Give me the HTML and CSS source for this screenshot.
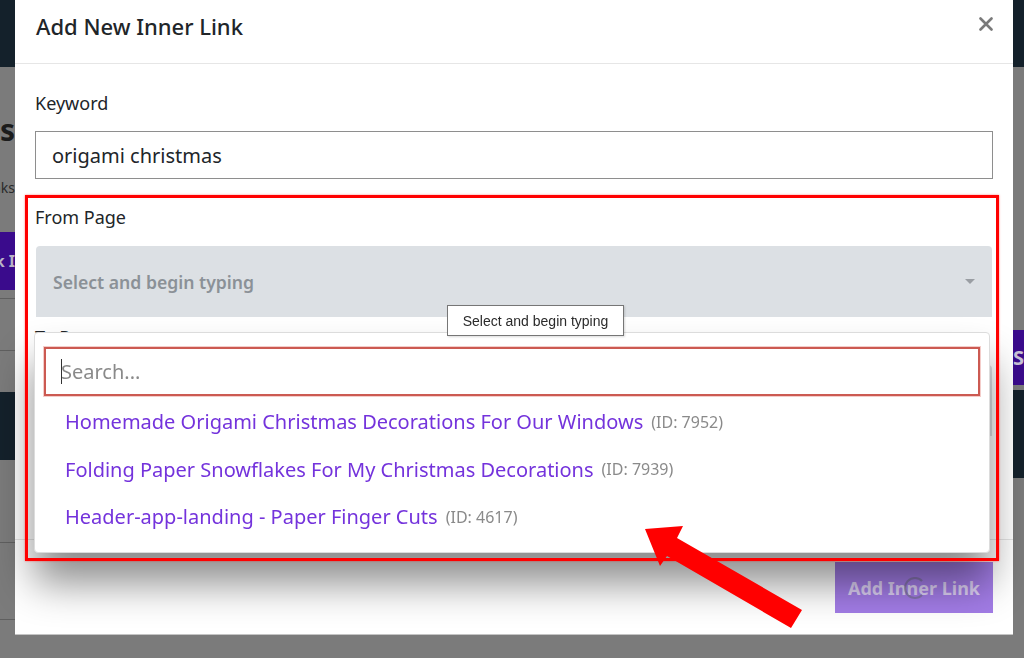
FILE: index.html
```html
<!DOCTYPE html>
<html lang="en">
<head>
    <meta charset="UTF-8">
    <meta name="viewport" content="width=device-width, initial-scale=1.0">
    <title>Add New Inner Link</title>
    <link rel="stylesheet" href="styles.css">
</head>
<body>
    <!-- Page behind the modal (dimmed) -->
    <div class="page">
        <header class="topbar"></header>
        <div class="page-main">
            <div class="side side-left">
                <h1 class="page-heading">Inner Links</h1>
                <p class="page-sub">Manage inner links</p>
                <button class="btn-dark">Add Link I</button>
                <div class="bg-rule rule-1"></div>
                <div class="bg-rule rule-2"></div>
                <div class="bg-thead"></div>
                <div class="bg-rule rule-3"></div>
                <div class="bg-rule rule-4"></div>
            </div>
            <div class="page-center"></div>
            <div class="side side-right">
                <button class="btn-dark btn-search">Search</button>
                <div class="bg-thead thead-right"></div>
            </div>
        </div>
    </div>

    <!-- Modal -->
    <div class="modal">
        <div class="modal-header">
            <h2 class="modal-title">Add New Inner Link</h2>
            <svg class="close-icon" width="14" height="14" viewBox="0 0 14 14">
                <path d="M1.5 1.5 L12.5 12.5 M12.5 1.5 L1.5 12.5" stroke="#7a7a7a" stroke-width="2.6" stroke-linecap="round"/>
            </svg>
        </div>

        <div class="modal-body">
            <div class="field">
                <div class="field-label">Keyword</div>
                <div class="text-input">origami christmas</div>
            </div>

            <div class="field field-from">
                <div class="field-label">From Page</div>
                <div class="select-wrap">
                    <div class="select-box">
                        <span>Select and begin typing</span>
                        <span class="select-caret"></span>
                    </div>

                    <!-- open dropdown -->
                    <div class="dropdown">
                        <div class="search-box">
                            <span class="text-caret"></span>
                            <span class="search-placeholder">Search...</span>
                        </div>
                        <ul class="result-list">
                            <li class="result-item">Homemade Origami Christmas Decorations For Our Windows <span class="result-id">(ID: 7952)</span></li>
                            <li class="result-item">Folding Paper Snowflakes For My Christmas Decorations <span class="result-id">(ID: 7939)</span></li>
                            <li class="result-item">Header-app-landing - Paper Finger Cuts <span class="result-id">(ID: 4617)</span></li>
                        </ul>
                    </div>
                </div>
            </div>

            <div class="field field-to">
                <div class="field-label">To Page</div>
                <div class="select-box"></div>
            </div>

            <div class="tooltip">Select and begin typing</div>
        </div>

        <div class="modal-footer">
            <button class="btn-submit">
                Add Inner Link
                <span class="spinner"></span>
            </button>
        </div>
    </div>

    <!-- Annotation -->
    <div class="annot-box"></div>
    <svg class="annot-arrow" width="1024" height="658" viewBox="0 0 1024 658">
        <polygon points="645,529 683,526 677,538 802,610 791,628 667,556 660,566" fill="#ff0000"/>
    </svg>
</body>
</html>
```

FILE: styles.css
```css
/* General Styles */
* {
    box-sizing: border-box;
}

body {
    margin: 0;
    height: 100vh;
    overflow: hidden;
    font-family: "Noto Sans", "Open Sans", sans-serif;
    background-color: #7b7b7b;
    color: #212529;
}

/* Background page (under the overlay) */
.topbar {
    height: 67px;
    background-color: #14212b;
}

.page-main {
    display: grid;
    grid-template-columns: 15px 1fr 11px;
}

.side {
    display: flex;
    flex-direction: column;
    overflow: hidden;
}

.side-left {
    align-items: flex-end;
    padding-top: 43px;
}

.page-heading {
    margin: 0;
    font-size: 30px;
    line-height: 40px;
    font-weight: 700;
    white-space: nowrap;
    color: #1c1c1c;
}

.page-sub {
    margin: 28px 0 0;
    font-size: 14px;
    line-height: 20px;
    white-space: nowrap;
    color: #2a2a2a;
}

.btn-dark {
    margin-top: 34px;
    height: 58px;
    padding: 0;
    border: none;
    background-color: #3a0b8c;
    color: #b9b3c6;
    font-family: inherit;
    font-size: 16px;
    font-weight: 700;
    white-space: nowrap;
}

.bg-rule {
    align-self: stretch;
    height: 1px;
    background-color: #5f5f5f;
}

.rule-1 { margin-top: 8px; }
.rule-2 { margin-top: 51px; }
.rule-3 { margin-top: 82px; }
.rule-4 { margin-top: 76px; }

.bg-thead {
    align-self: stretch;
    margin-top: 41px;
    height: 68px;
    background-color: #14212b;
}

.side-right {
    align-items: flex-start;
}

.btn-search {
    margin-top: 263px;
    height: 55px;
    padding: 0;
    font-size: 20px;
    letter-spacing: -1px;
    align-self: stretch;
    text-align: left;
    color: #c9c3d6;
}

.thead-right {
    margin-top: 5px;
    height: 88px;
}

/* Modal */
.modal {
    position: fixed;
    left: 15px;
    top: 0;
    width: 998px;
    height: 635px;
    background-color: #fff;
    border-bottom: 1px solid #c4c4c4;
    display: flex;
    flex-direction: column;
}

.modal-header {
    height: 64px;
    padding: 11px 21px 0 21px;
    display: flex;
    justify-content: space-between;
    align-items: flex-start;
    border-bottom: 1px solid #e6e6e6;
}

.modal-title {
    margin: 0;
    font-size: 22px;
    line-height: 30px;
    font-weight: 500;
    color: #212529;
}

.close-icon {
    margin-top: 6px;
    margin-right: -1px;
}

.modal-body {
    position: relative;
    flex: 1;
    padding: 26px 20px 0;
}

.field-label {
    font-size: 18px;
    line-height: 27px;
    margin-bottom: 14px;
}

.text-input {
    height: 48px;
    border: 1px solid #8e8e8e;
    padding: 0 16px;
    display: flex;
    align-items: center;
    font-size: 20px;
}

.field-from {
    margin-top: 25px;
}

.field-from .field-label {
    margin-bottom: 15px;
}

.select-wrap {
    position: relative;
}

.select-box {
    height: 71px;
    margin: 0 1px;
    padding: 0 17px 0 17px;
    display: flex;
    align-items: center;
    justify-content: space-between;
    background-color: #dce0e4;
    border-radius: 4px 4px 0 0;
    font-size: 17.6px;
    font-weight: 600;
    color: #8b9197;
}

.select-caret {
    width: 0;
    height: 0;
    border-left: 5px solid transparent;
    border-right: 5px solid transparent;
    border-top: 5px solid #9a9ea3;
}

.field-to {
    margin-top: 7px;
}

/* Dropdown */
.dropdown {
    position: absolute;
    z-index: 5;
    top: 86px;
    left: -1px;
    width: 956px;
    height: 221px;
    padding: 14px 9px;
    background-color: #fff;
    border: 1px solid #dcdcdc;
    border-radius: 4px;
    box-shadow: 0 30px 40px rgba(0, 0, 0, 0.45);
}

.search-box {
    height: 49px;
    border: 2px solid #cc5a52;
    box-shadow: 0 0 0 1px #f4cdca;
    padding-left: 15px;
    display: flex;
    align-items: center;
    font-size: 20px;
    color: #8a8a8a;
}

.text-caret {
    width: 1px;
    height: 25px;
    background-color: #333;
    margin-right: -1px;
}

.result-list {
    list-style: none;
    margin: 0;
    padding: 2px 0 0;
}

.result-item {
    height: 47.5px;
    padding-left: 21px;
    display: flex;
    align-items: center;
    gap: 8px;
    font-size: 20px;
    color: #7433dc;
    white-space: nowrap;
}

.result-id {
    font-size: 16px;
    color: #8a8a8a;
}

/* Tooltip */
.tooltip {
    position: absolute;
    z-index: 6;
    left: 432px;
    top: 241px;
    width: 177px;
    height: 31px;
    border: 1px solid #767676;
    background-color: #fff;
    box-shadow: 1px 1px 2px rgba(0, 0, 0, 0.15);
    display: flex;
    align-items: center;
    justify-content: center;
    font-family: "Liberation Sans", Arial, sans-serif;
    font-size: 14px;
    color: #2b2b2b;
}

/* Footer */
.modal-footer {
    height: 95px;
    border-top: 1px solid #e5e5e5;
    padding: 22px 20px 0;
    display: flex;
    justify-content: flex-end;
    align-items: flex-start;
}

.btn-submit {
    position: relative;
    width: 158px;
    height: 51px;
    border: none;
    background-color: #a27ce6;
    color: rgba(238, 232, 248, 0.78);
    font-family: inherit;
    font-size: 18px;
    font-weight: 700;
}

.spinner {
    position: absolute;
    left: 69px;
    top: 15px;
    width: 22px;
    height: 22px;
    border-radius: 50%;
    border: 2px solid rgba(110, 110, 130, 0.55);
    border-right-color: transparent;
}

/* Annotation */
.annot-box {
    position: fixed;
    z-index: 10;
    left: 25px;
    top: 195px;
    width: 974px;
    height: 366px;
    border: 3px solid #ff0000;
    box-shadow: 0 0 2px rgba(255, 0, 0, 0.5);
    pointer-events: none;
}

.annot-arrow {
    position: fixed;
    z-index: 11;
    left: 0;
    top: 0;
    pointer-events: none;
}
```
